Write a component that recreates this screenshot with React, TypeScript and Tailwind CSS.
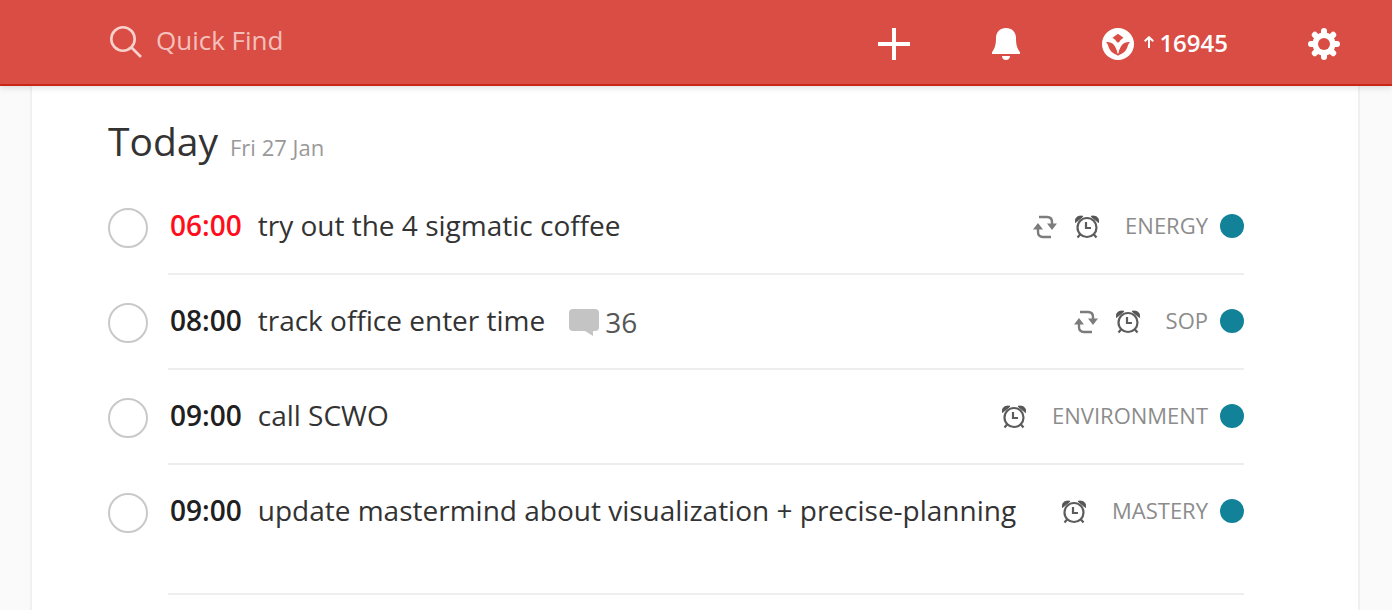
import React from 'react';

type Task = {
  time: string;
  title: string;
  project: string;
  overdue?: boolean;
  recurring?: boolean;
  comments?: number;
};

const tasks: Task[] = [
  { time: '06:00', title: 'try out the 4 sigmatic coffee', project: 'ENERGY', overdue: true, recurring: true },
  { time: '08:00', title: 'track office enter time', project: 'SOP', recurring: true, comments: 36 },
  { time: '09:00', title: 'call SCWO', project: 'ENVIRONMENT' },
  { time: '09:00', title: 'update mastermind about visualization + precise-planning', project: 'MASTERY' },
];

function SearchIcon() {
  return (
    <svg className="size-8 shrink-0" viewBox="0 0 32 32" fill="none" stroke="#f8d0cc" strokeWidth="2.6" aria-hidden="true">
      <circle cx="13" cy="13" r="11.7" />
      <path d="M21.5 21.5 31 31" />
    </svg>
  );
}

function PlusIcon() {
  return (
    <svg className="size-8" viewBox="0 0 32 32" fill="#fff" aria-hidden="true">
      <path d="M14 0h4v14h14v4H18v14h-4V18H0v-4h14z" />
    </svg>
  );
}

function BellIcon() {
  return (
    <svg className="h-8 w-7" viewBox="0 0 28 32" fill="#fff" aria-hidden="true">
      <path d="M14 0C8.200 0 4 4 4 10C4 16 3.300 19.500 0 24.300V26H28V24.300C24.700 19.500 24 16 24 10C24 4 19.800 0 14 0Z" />
      <path d="M10 28H18C18 30.500 16.300 32 14 32C11.700 32 10 30.500 10 28Z" />
    </svg>
  );
}

function KarmaIcon() {
  return (
    <svg className="size-8" viewBox="0 0 32 32" aria-hidden="true">
      <circle cx="16" cy="16" r="16" fill="#fff" />
      <g fill="#da4d44">
        <path d="M16 5.800C17.500 7.300 20 8.300 21.500 10C19.500 11 18 12.300 17 14.200Q16 15 15 14.200C14 12.300 12.500 11 10.500 10C12 8.300 14.500 7.300 16 5.800Z" />
        <path d="M4 14C10.500 13.500 13.500 17 16 25.500C18.500 17 21.500 13.500 28 14C26 15.500 26 18.500 24 22C22 25.200 18.500 26 16 27.800C13.500 26 10 25.200 8 22C6 18.500 6 15.500 4 14Z" />
      </g>
      <path d="M10.500 14.800C13.500 17 14.500 20 16 26.500C17.500 20 18.500 17 21.500 14.800" fill="#fff" />
    </svg>
  );
}

function ArrowUpIcon() {
  return (
    <svg className="h-3 w-2.5" viewBox="0 0 10 12" fill="none" stroke="#fff" strokeWidth="2" aria-hidden="true">
      <path d="M5 12V1.500M.700 5.300 5 1.200l4.300 4.100" />
    </svg>
  );
}

function GearIcon() {
  return (
    <svg className="size-8" viewBox="0 0 32 32" aria-hidden="true">
      <g stroke="#fff" strokeWidth="6" strokeLinecap="round">
        <path d="M16 3V29M3 16H29M6.800 6.800 25.200 25.200M25.200 6.800 6.800 25.200" />
      </g>
      <circle cx="16" cy="16" r="11.500" fill="#fff" />
      <circle cx="16" cy="16" r="6" fill="#da4d44" />
    </svg>
  );
}

function RecurringIcon() {
  return (
    <svg className="size-6" viewBox="0 0 24 24" aria-hidden="true">
      <g fill="none" stroke="#7c7c7c" strokeWidth="2.400">
        <path d="M6 2H14Q19 2 19 7V11" />
        <path d="M18 22H10Q5 22 5 17V13" />
      </g>
      <path d="M14 8.500H24L19 15ZM0 14.500H10L5 8Z" fill="#7c7c7c" />
    </svg>
  );
}

function AlarmIcon() {
  return (
    <svg className="size-6" viewBox="0 0 24 24" aria-hidden="true">
      <g fill="none" stroke="#5c5c5c" strokeWidth="2.200">
        <circle cx="12" cy="12.500" r="9.500" />
        <path d="M11 7V13H16M5.500 19 2.500 22.500M18.500 19 21.500 22.500" />
      </g>
      <path d="M.500 7.500C-.500 3 3 .300 8 1.300Z M23.500 7.500C24.500 3 21 .300 16 1.300Z" stroke="#555" strokeWidth="1" fill="#555" />
    </svg>
  );
}

function CommentIcon() {
  return (
    <svg className="h-7 w-[30px]" viewBox="0 0 30 28" fill="#c4c4c4" aria-hidden="true">
      <path d="M4 1H26Q30 1 30 5V19Q30 23 26 23H24V28L16 23H4Q0 23 0 19V5Q0 1 4 1Z" />
    </svg>
  );
}

function TaskRow({ task, last }: { task: Task; last: boolean }) {
  return (
    <li className="flex gap-5">
      <input
        type="checkbox"
        aria-label={`Complete ${task.title}`}
        className="mt-7 size-10 shrink-0 appearance-none rounded-full border-2 border-[#c9c9c9] checked:bg-[#c9c9c9]"
      />
      <div className={`flex min-w-0 flex-1 items-start border-b-2 border-[#eee] pt-6 pl-0.5 ${last ? 'pb-15' : 'pb-[25px]'}`}>
        <time className={`mr-4 text-[28px] leading-[42px] font-semibold ${task.overdue ? 'text-[#ff0d1b]' : 'text-[#202020]'}`}>
          {task.time}
        </time>
        <span className="text-[28px] leading-[42px] text-[#333]">{task.title}</span>
        {task.comments && (
          <a href="#comments" className="ml-6 flex items-center gap-1.5 pt-0.5 text-[28px] leading-[42px] text-[#555]">
            <CommentIcon />
            {task.comments}
          </a>
        )}
        <div className="ml-auto flex h-11 shrink-0 items-center">
          <span className="flex gap-[18px] pt-0.5">
            {task.recurring && <RecurringIcon />}
            <AlarmIcon />
          </span>
          <a href="#project" className="ml-[26px] pb-0.5 text-[22px] leading-10 text-[#8c8c8c]">
            {task.project}
          </a>
          <span className="ml-3 size-6 rounded-full bg-[#128299]" />
        </div>
      </div>
    </li>
  );
}

export default function App() {
  return (
    <div className="flex h-screen flex-col overflow-hidden bg-[#fafafa] font-['Open_Sans','Noto_Sans',sans-serif]">
      <header className="z-10 flex h-[86px] shrink-0 items-center justify-between border-b-2 border-[#cb2515] bg-[#da4d44] pr-[52px] pl-[110px] shadow-[0_2px_6px_rgba(0,0,0,0.12)]">
        <label className="flex items-center gap-3.5">
          <SearchIcon />
          <input
            type="text"
            placeholder="Quick Find"
            aria-label="Quick Find"
            className="w-80 bg-transparent pb-1 text-[26px] leading-9 text-white outline-none placeholder:text-[#f4c0bb]"
          />
        </label>
        <div className="flex items-center pt-1">
          <button type="button" aria-label="Add task" className="mr-[82px]">
            <PlusIcon />
          </button>
          <button type="button" aria-label="Notifications" className="mr-[82px]">
            <BellIcon />
          </button>
          <button type="button" aria-label="Karma" className="mr-20 flex items-center text-2xl font-semibold text-white">
            <KarmaIcon />
            <span className="mr-[5px] ml-2.5 pb-1">
              <ArrowUpIcon />
            </span>
            <span className="pb-0.5">16945</span>
          </button>
          <button type="button" aria-label="Settings">
            <GearIcon />
          </button>
        </div>
      </header>
      <main className="mr-8 ml-[30px] flex-1 border-x-2 border-[#f0f0f0] bg-white pr-[114px] pl-[76px]">
        <h1 className="flex items-baseline gap-3 pt-6 text-[39px] leading-[62px] text-[#333]">
          Today
          <span className="text-[22px] text-[#999]">Fri 27 Jan</span>
        </h1>
        <ul className="pt-0.5">
          {tasks.map((task, i) => (
            <TaskRow key={task.title} task={task} last={i === tasks.length - 1} />
          ))}
        </ul>
      </main>
    </div>
  );
}
